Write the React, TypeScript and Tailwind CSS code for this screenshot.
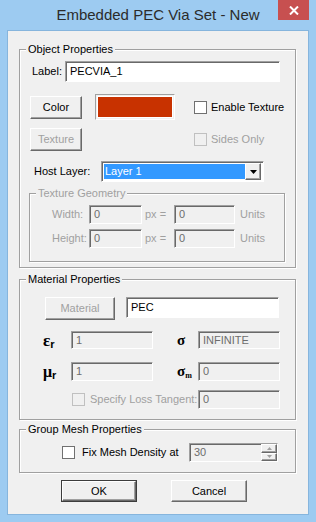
const raised =
  'border border-t-white border-l-white border-r-[#696969] border-b-[#696969] shadow-[inset_-1px_-1px_0_#a0a0a0] bg-[#f0f0f0]';
const sunken =
  'border border-t-[#a0a0a0] border-l-[#a0a0a0] border-r-white border-b-white shadow-[inset_1px_1px_0_#696969]';

function Group({ title, className, children, muted }: { title: string; className: string; children: React.ReactNode; muted?: boolean }) {
  return (
    <div className={`relative border border-[#a0a0a0] shadow-[inset_1px_1px_0_#fff,1px_1px_0_#fff] ${className}`}>
      <span className={`absolute left-[6px] top-[-8px] bg-[#f0f0f0] px-[2px] leading-[14px] ${muted ? 'text-[#a0a0a0]' : 'text-black'}`}>
        {title}
      </span>
      {children}
    </div>
  );
}

function Check({ disabled }: { disabled?: boolean }) {
  return (
    <span
      className={`block h-[13px] w-[13px] border ${disabled ? 'border-[#c0c0c0] bg-[#f0f0f0]' : 'border-[#707070] bg-white'}`}
    />
  );
}

function Field({ value, w, h, disabled }: { value: string; w: string; h: string; disabled?: boolean }) {
  return (
    <div
      className={`${sunken} ${w} ${h} flex items-center pl-[4px] ${disabled ? 'bg-[#f0f0f0] text-[#6d6d6d]' : 'bg-white text-black'}`}
    >
      {value}
    </div>
  );
}

export default function App() {
  return (
    <div className="relative h-[522px] w-[316px] bg-[#9dcbf1] text-[11px] font-['Liberation_Sans',Arial,sans-serif] text-black">
      <div className="flex h-[30px] items-center justify-center pt-[1px] text-[15px] text-[#2b2b2b]">
        Embedded PEC Via Set - New
      </div>
      <div className="absolute right-[7px] top-0 flex h-[20px] w-[31px] items-center justify-center bg-[#c75050]">
        <svg width="10" height="9" viewBox="0 0 10 9">
          <path d="M1 0.5 L9 8.5 M9 0.5 L1 8.5" stroke="#fff" strokeWidth="2" />
        </svg>
      </div>

      <div className="ml-[7px] h-[485px] w-[302px] border border-[#86b5dd] bg-[#f0f0f0]">
        {/* Object Properties */}
        <Group title="Object Properties" className="ml-[11px] mt-[18px] h-[219px] w-[277px]">
          <div className="mt-[11px] flex h-[21px] items-center pl-[12px]">
            <span className="w-[33px]">Label:</span>
            <Field value="PECVIA_1" w="w-[215px]" h="h-[21px]" />
          </div>

          <div className="mt-[12px] flex h-[26px] items-center pl-[10px]">
            <div className={`${raised} flex h-[23px] w-[52px] items-center justify-center`}>Color</div>
            <div className="ml-[13px] h-[26px] w-[80px] border border-t-[#a0a0a0] border-l-[#a0a0a0] border-r-white border-b-white p-[1px]">
              <div className="h-full w-full border border-white bg-[#c83200]" />
            </div>
            <div className="ml-[19px] flex items-center gap-[4px]">
              <Check />
              <span>Enable Texture</span>
            </div>
          </div>

          <div className="mt-[8px] flex h-[23px] items-center pl-[10px]">
            <div className={`${raised} flex h-[23px] w-[52px] items-center justify-center text-[#a0a0a0]`}>Texture</div>
            <div className="ml-[112px] flex items-center gap-[4px] text-[#a0a0a0]">
              <Check disabled />
              <span>Sides Only</span>
            </div>
          </div>

          <div className="mt-[10px] flex h-[21px] items-center pl-[14px]">
            <span className="w-[67px]">Host Layer:</span>
            <div className={`${sunken} flex h-[21px] w-[163px] items-center bg-white p-[2px]`}>
              <div className="flex h-full flex-1 items-center bg-[#3399ff] pl-[1px] text-white">Layer 1</div>
              <div className={`${raised} flex h-[17px] w-[16px] items-center justify-center`}>
                <svg width="7" height="4" viewBox="0 0 7 4">
                  <path d="M0 0 H7 L3.5 4 Z" fill="#000" />
                </svg>
              </div>
            </div>
          </div>

          <Group title="Texture Geometry" muted className="ml-[9px] mt-[11px] h-[69px] w-[256px]">
            <div className="mt-[11px] flex h-[19px] items-center pl-[22px] text-[#a0a0a0]">
              <span className="w-[37px]">Width:</span>
              <Field value="0" w="w-[53px]" h="h-[19px]" disabled />
              <span className="ml-[3px] w-[29px]">px =</span>
              <Field value="0" w="w-[61px]" h="h-[19px]" disabled />
              <span className="ml-[5px]">Units</span>
            </div>
            <div className="mt-[5px] flex h-[19px] items-center pl-[22px] text-[#a0a0a0]">
              <span className="w-[37px]">Height:</span>
              <Field value="0" w="w-[53px]" h="h-[19px]" disabled />
              <span className="ml-[3px] w-[29px]">px =</span>
              <Field value="0" w="w-[61px]" h="h-[19px]" disabled />
              <span className="ml-[5px]">Units</span>
            </div>
          </Group>
        </Group>

        {/* Material Properties */}
        <Group title="Material Properties" className="ml-[11px] mt-[11px] h-[141px] w-[277px]">
          <div className="mt-[17px] flex h-[23px] items-start pl-[25px]">
            <div className={`${raised} flex h-[23px] w-[70px] items-center justify-center text-[#a0a0a0]`}>Material</div>
            <div className="ml-[11px]">
              <Field value="PEC" w="w-[153px]" h="h-[21px]" />
            </div>
          </div>

          <div className="mt-[11px] flex h-[18px] items-center pl-[23px]">
            <span className="w-[28px] font-['Liberation_Serif',serif] text-[17px] font-bold leading-none">
              ε<sub className="text-[11px] font-['Liberation_Sans',sans-serif]">r</sub>
            </span>
            <Field value="1" w="w-[82px]" h="h-[18px]" disabled />
            <span className="ml-[24px] w-[21px] font-['Liberation_Serif',serif] text-[15px] font-bold leading-none">σ</span>
            <Field value="INFINITE" w="w-[82px]" h="h-[18px]" disabled />
          </div>

          <div className="mt-[13px] flex h-[19px] items-center pl-[23px]">
            <span className="w-[28px] font-['Liberation_Serif',serif] text-[16px] font-bold leading-none">
              μ<sub className="text-[11px] font-['Liberation_Sans',sans-serif]">r</sub>
            </span>
            <Field value="1" w="w-[82px]" h="h-[19px]" disabled />
            <span className="ml-[24px] w-[21px] font-['Liberation_Serif',serif] text-[15px] font-bold leading-none">
              σ<sub className="text-[8px]">m</sub>
            </span>
            <Field value="0" w="w-[82px]" h="h-[19px]" disabled />
          </div>

          <div className="mt-[9px] flex h-[19px] items-center pl-[52px] text-[#a0a0a0]">
            <Check disabled />
            <span className="ml-[5px] w-[108px]">Specify Loss Tangent:</span>
            <Field value="0" w="w-[82px]" h="h-[19px]" disabled />
          </div>
        </Group>

        {/* Group Mesh Properties */}
        <Group title="Group Mesh Properties" className="ml-[11px] mt-[9px] h-[44px] w-[277px]">
          <div className="mt-[13px] flex h-[19px] items-center pl-[42px]">
            <Check />
            <span className="ml-[7px] w-[107px]">Fix Mesh Density at</span>
            <div className={`${sunken} flex h-[19px] w-[89px] items-center bg-[#f0f0f0] pl-[4px] text-[#6d6d6d]`}>
              <span className="flex-1">30</span>
              <div className="flex h-full w-[16px] flex-col">
                <div className={`${raised} flex flex-1 items-center justify-center`}>
                  <svg width="5" height="3" viewBox="0 0 5 3"><path d="M0 3 H5 L2.5 0 Z" fill="#a0a0a0" /></svg>
                </div>
                <div className={`${raised} flex flex-1 items-center justify-center`}>
                  <svg width="5" height="3" viewBox="0 0 5 3"><path d="M0 0 H5 L2.5 3 Z" fill="#a0a0a0" /></svg>
                </div>
              </div>
            </div>
          </div>
        </Group>

        <div className="mt-[7px] flex gap-[34px] pl-[53px]">
          <div className="border border-[#3c3c3c]">
            <div className={`${raised} flex h-[20px] w-[74px] items-center justify-center`}>OK</div>
          </div>
          <div className={`${raised} flex h-[22px] w-[76px] items-center justify-center`}>Cancel</div>
        </div>
      </div>
    </div>
  );
}
